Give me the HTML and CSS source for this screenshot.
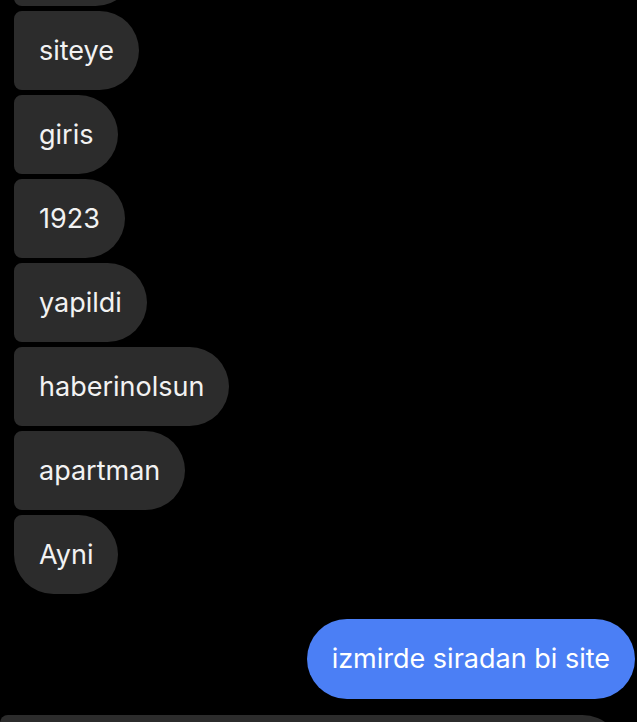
FILE: index.html
```html
<!DOCTYPE html>
<html lang="tr">
<head>
    <meta charset="UTF-8">
    <title>Mesajlar</title>
    <link rel="stylesheet" href="styles.css">
</head>
<body>
    <div class="chat">
        <div class="group incoming">
            <div class="bubble cut-top">&nbsp;</div>
            <div class="bubble">siteye</div>
            <div class="bubble">giris</div>
            <div class="bubble">1923</div>
            <div class="bubble">yapildi</div>
            <div class="bubble">haberinolsun</div>
            <div class="bubble">apartman</div>
            <div class="bubble last">Ayni</div>
        </div>

        <div class="group outgoing">
            <div class="bubble">izmirde siradan bi site</div>
        </div>

        <div class="group incoming wide">
            <div class="bubble big">&nbsp;</div>
        </div>
    </div>
</body>
</html>
```

FILE: styles.css
```css
html, body {
    background: #000;
}
body {
    margin: 0;
    height: 722px;
    overflow: hidden;
    font-family: Inter, "Noto Sans", sans-serif;
    font-size: 27px;
    color: #f2f2f2;
}
.chat {
    display: flex;
    flex-direction: column;
    margin-top: -73px;
}
.group {
    display: flex;
    flex-direction: column;
    gap: 5px;
}
.incoming {
    align-items: flex-start;
    padding-left: 14px;
}
.outgoing {
    align-items: flex-end;
    padding-right: 2px;
    margin-top: 25px;
}
.bubble {
    box-sizing: border-box;
    height: 79px;
    padding: 0 25px;
    line-height: 79px;
    white-space: nowrap;
    background: #2c2c2c;
    border-radius: 8px 40px 40px 8px;
}
.cut-top {
    width: 121px;
}
.bubble.last {
    border-radius: 8px 40px 40px 40px;
}
.outgoing .bubble {
    height: 80px;
    line-height: 80px;
    background: #4b7ff5;
    color: #fff;
    border-radius: 40px;
}
.wide {
    padding-left: 0;
    margin-top: 16px;
    height: 7px;
    overflow: hidden;
}
.bubble.big {
    width: 622px;
    height: 80px;
}
```
